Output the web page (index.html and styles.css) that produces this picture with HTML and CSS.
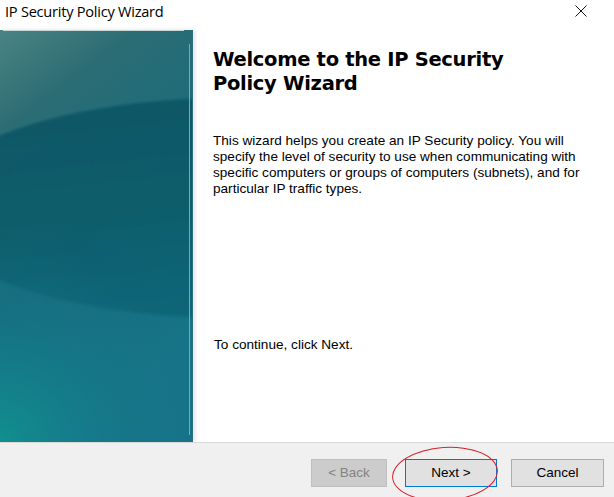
FILE: index.html
```html
<!DOCTYPE html>
<html>
<head>
<meta charset="utf-8">
<link rel="stylesheet" href="styles.css">
</head>
<body>
<div class="window">
  <div class="titlebar">
    <span class="title">IP Security Policy Wizard</span>
    <svg class="close" width="12" height="12" viewBox="0 0 12 12"><path d="M0.5 0.5 L11.5 11.5 M11.5 0.5 L0.5 11.5" stroke="#111" stroke-width="1" fill="none"/></svg>
  </div>
  <div class="main">
    <div class="sidebar">
      <svg class="art" width="192" height="412" viewBox="0 0 192 412" preserveAspectRatio="none">
        <defs>
          <linearGradient id="bg" x1="0" y1="0" x2="0.35" y2="1">
            <stop offset="0" stop-color="#4b8383"/>
            <stop offset="0.22" stop-color="#2c6d74"/>
            <stop offset="0.6" stop-color="#166b7c"/>
            <stop offset="1" stop-color="#177488"/>
          </linearGradient>
          <radialGradient id="bl" cx="0" cy="1" r="1" gradientUnits="objectBoundingBox" gradientTransform="translate(0,1) scale(1,0.9) translate(0,-1)">
            <stop offset="0" stop-color="#10918f" stop-opacity="0.95"/>
            <stop offset="0.55" stop-color="#13808c" stop-opacity="0.35"/>
            <stop offset="1" stop-color="#177488" stop-opacity="0"/>
          </radialGradient>
          <linearGradient id="el" x1="0" y1="0" x2="0.3" y2="1">
            <stop offset="0" stop-color="#0b5563"/>
            <stop offset="0.6" stop-color="#0d5d6c"/>
            <stop offset="1" stop-color="#116676"/>
          </linearGradient>
          <filter id="blur"><feGaussianBlur stdDeviation="1.2"/></filter>
        </defs>
        <rect width="192" height="412" fill="url(#bg)"/>
        <ellipse cx="232" cy="178" rx="309" ry="110" fill="url(#el)" filter="url(#blur)" opacity="0.92"/>
        <rect y="180" width="192" height="232" fill="url(#bl)"/>
        <line x1="3" y1="0.5" x2="184" y2="0.5" stroke="#c9d6d6" stroke-width="1"/>
        <line x1="189.5" y1="14" x2="189.5" y2="405" stroke="#7fa9b0" stroke-width="1"/>
      </svg>
    </div>
    <div class="content">
      <h1 class="heading">Welcome to the IP Security Policy Wizard</h1>
      <p class="intro">This wizard helps you create an IP Security policy. You will specify the level of security to use when communicating with specific computers or groups of computers (subnets), and for particular IP traffic types.</p>
      <p class="continue">To continue, click Next.</p>
    </div>
  </div>
  <div class="footer">
    <button class="btn disabled">&lt; Back</button>
    <button class="btn primary">Next &gt;</button>
    <button class="btn cancel">Cancel</button>
    <div class="annotation"></div>
  </div>
</div>
</body>
</html>
```

FILE: styles.css
```css
html, body {
  margin: 0;
  padding: 0;
  background: #ffffff;
}
.window {
  width: 614px;
  height: 497px;
  display: flex;
  flex-direction: column;
  font-family: "Liberation Sans", Arial, sans-serif;
  color: #000;
  overflow: hidden;
}
.titlebar {
  height: 30px;
  display: flex;
  align-items: center;
  justify-content: space-between;
  padding: 0 27px 8px 5px;
  box-sizing: border-box;
}
.title {
  font-family: "Open Sans", "Noto Sans", sans-serif;
  font-size: 14.6px;
  letter-spacing: -0.25px;
  color: #000;
}
.close {
  display: block;
}
.main {
  height: 412px;
  display: flex;
}
.sidebar {
  width: 193px;
  height: 412px;
  flex: none;
  box-shadow: 2px 0 4px rgba(0,0,0,0.12);
  position: relative;
}
.art {
  display: block;
  border-right: 1px solid #2c6f80;
}
.content {
  flex: 1;
  padding: 18px 20px 0 20px;
}
.heading {
  font-family: "DejaVu Sans", Verdana, sans-serif;
  font-weight: bold;
  font-size: 19.5px;
  line-height: 24px;
  margin: 0;
  width: 310px;
  letter-spacing: -0.3px;
}
.intro {
  font-size: 13.6px;
  line-height: 16px;
  margin: 37px 0 0 0;
  width: 385px;
}
.continue {
  font-size: 13.6px;
  line-height: 16px;
  margin: 140px 0 0 1px;
}
.footer {
  flex: 1;
  background: #f0f0f0;
  border-top: 1px solid #d9d9d9;
  display: flex;
  align-items: center;
  justify-content: flex-end;
  padding: 5px 10px 0 0;
  gap: 14px;
  position: relative;
}
.btn {
  font-family: "Liberation Sans", Arial, sans-serif;
  font-size: 13.5px;
  height: 28px;
  width: 76px;
  border: 1px solid #adadad;
  background: #e1e1e1;
  color: #000;
  padding: 0;
}
.btn.disabled {
  background: #cccccc;
  border-color: #bfbfbf;
  color: #838383;
  margin-right: 4px;
}
.btn.primary {
  width: 92px;
  border: 1px solid #0078d7;
  box-shadow: inset 0 0 0 1px #e1e1e1;
}
.btn.cancel {
  width: 93px;
}
.annotation {
  position: absolute;
  left: 392px;
  top: 4px;
  width: 106px;
  height: 54px;
  border: 1.5px solid #d8202a;
  border-radius: 50%;
  box-sizing: border-box;
  transform: rotate(-4deg);
}
```
